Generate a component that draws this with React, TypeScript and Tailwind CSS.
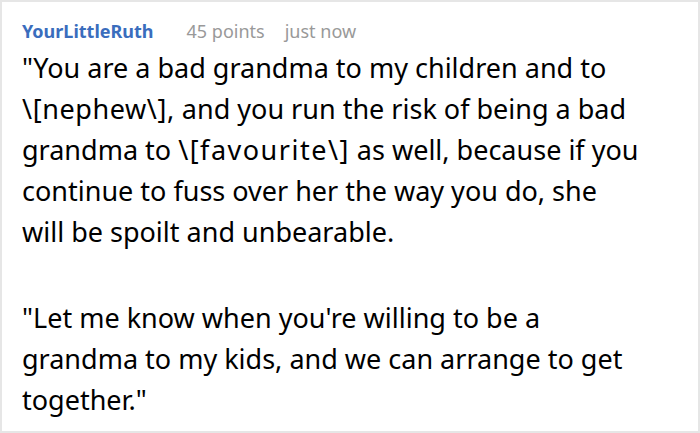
export default function App() {
  return (
    <div className="h-[433px] w-[700px] overflow-hidden border-2 border-[#e6e6e6] bg-white font-['Noto_Sans',sans-serif]">
      <div className="flex items-baseline px-[20px] pt-[16px] text-[18px]">
        <span className="font-bold text-[#3a6dbd]">YourLittleRuth</span>
        <span className="ml-[33px] text-[#999]">45 points</span>
        <span className="ml-[20px] text-[#999]">just now</span>
      </div>
      <div className="pl-[20px] pr-[49px] pt-[2px] text-[27px] leading-[41px] text-black">
        <p>
          "You are a bad grandma to my children and to{" "}
          <span className="whitespace-nowrap tracking-[0.6px]">\[nephew\],</span>{" "}
          and you run the risk of being a bad grandma to{" "}
          <span className="whitespace-nowrap tracking-[1.5px]">\[favourite\]</span>{" "}
          as well, because if you continue to fuss over her the way you do, she
          <br />
          will be spoilt and unbearable.
        </p>
        <p className="mt-[45px]">
          "Let me know when you're willing to be a grandma to my kids, and we
          can arrange to get together."
        </p>
      </div>
    </div>
  );
}
